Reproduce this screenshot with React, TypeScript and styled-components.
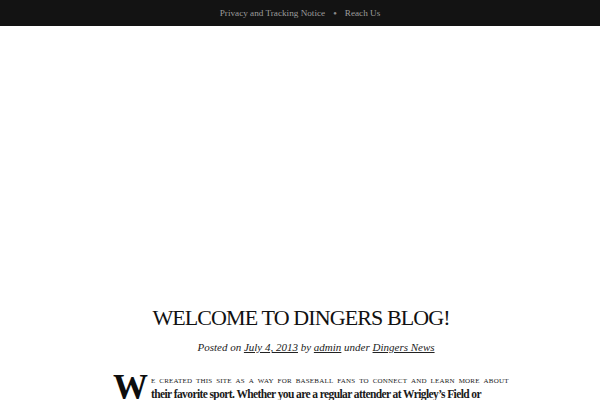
import React from "react";
import styled, { createGlobalStyle } from "styled-components";

const Global = createGlobalStyle`
  html, body { margin: 0; padding: 0; background: #fff; }
  body { font-family: "Liberation Serif", "DejaVu Serif", serif; color: #111; }
`;

const TopBar = styled.nav`
  height: 26px;
  background: #131313;
  display: flex;
  align-items: center;
  justify-content: center;
  gap: 8px;
  font-size: 9.2px;
  color: #999;
`;

const NavLink = styled.a`
  color: #9c9c9c;
  text-decoration: none;
`;

const Dot = styled.span`
  font-size: 6px;
  color: #8a8a8a;
`;

const Hero = styled.div`
  height: 278px;
`;

const Post = styled.article`
  width: 398px;
  margin: 0 0 0 113px;
`;

const Title = styled.h1`
  margin: 0;
  padding-right: 22px;
  text-align: center;
  font-weight: normal;
  font-size: 22px;
  letter-spacing: -0.9px;
  line-height: 28px;
  color: #111;
`;

const Meta = styled.p`
  margin: 9px 0 0;
  padding-left: 8px;
  text-align: center;
  font-style: italic;
  font-size: 11px;
  line-height: 13px;
  color: #222;
  a { color: #222; }
`;

const Body = styled.div`
  margin: 19px 0 0;
  font-size: 11.5px;
  line-height: 14px;
  color: #1a1a1a;
`;

const DropCap = styled.span`
  float: left;
  font-size: 35px;
  font-weight: bold;
  line-height: 30px;
  margin: 0 3px 0 0;
  color: #0d0d0d;
`;

const Caps = styled.span`
  display: block;
  white-space: nowrap;
  font-variant: small-caps;
  text-transform: lowercase;
  font-size: 10.5px;
  letter-spacing: 0.2px;
  word-spacing: 1px;
  color: #222;
`;

const Lead = styled.span`
  font-weight: bold;
  letter-spacing: -0.6px;
`;

export default function App() {
  return (
    <>
      <Global />
      <TopBar>
        <NavLink href="#">Privacy and Tracking Notice</NavLink>
        <Dot>●</Dot>
        <NavLink href="#">Reach Us</NavLink>
      </TopBar>
      <Hero />
      <Post>
        <Title>WELCOME TO DINGERS BLOG!</Title>
        <Meta>
          Posted on <a href="#">July 4, 2013</a> by <a href="#">admin</a> under{" "}
          <a href="#">Dingers News</a>
        </Meta>
        <Body>
          <DropCap>W</DropCap>
          <Caps>E CREATED THIS SITE AS A WAY FOR BASEBALL FANS TO CONNECT AND LEARN MORE ABOUT</Caps>
          <Lead>
            their favorite sport. Whether you are a regular attender at Wrigley’s Field or
            simply catch the occasional game on television, this is the place for you.
          </Lead>
        </Body>
      </Post>
    </>
  );
}
